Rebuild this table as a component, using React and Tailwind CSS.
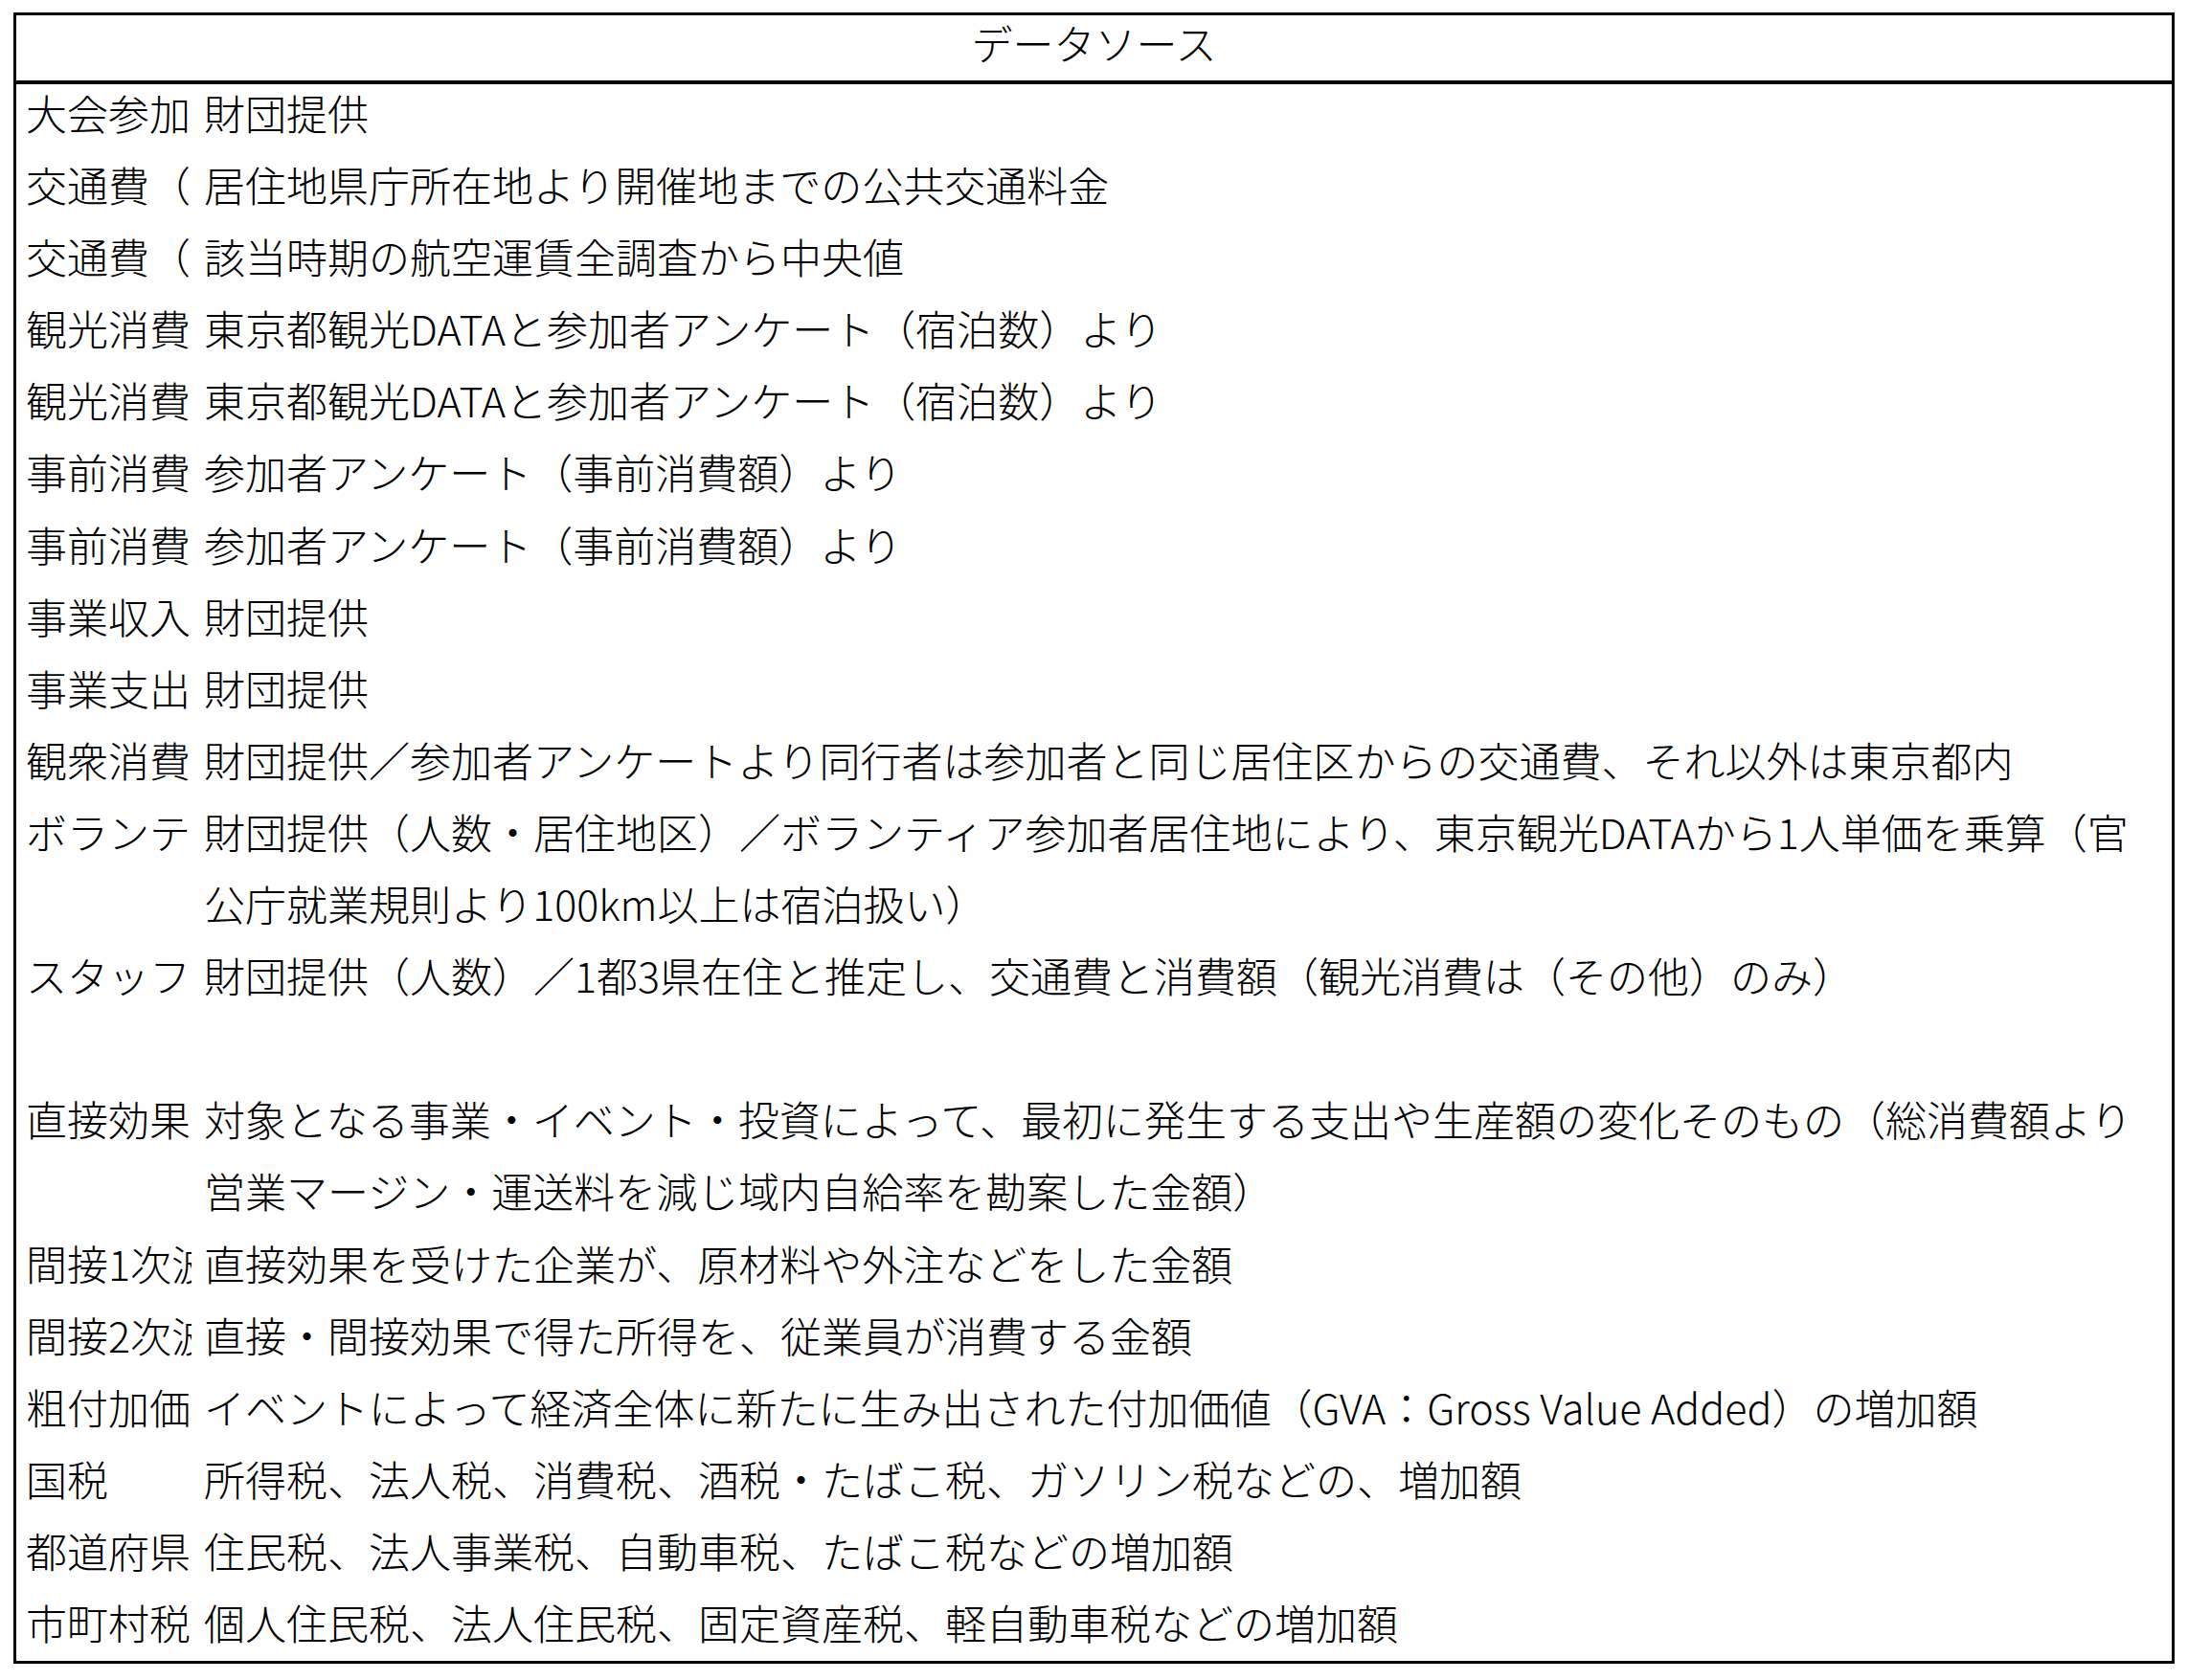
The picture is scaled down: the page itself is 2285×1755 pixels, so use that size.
import React from "react";

const rows = [
  ["大会参加", ["財団提供"]],
  ["交通費（", ["居住地県庁所在地より開催地までの公共交通料金"]],
  ["交通費（", ["該当時期の航空運賃全調査から中央値"]],
  ["観光消費", ["東京都観光DATAと参加者アンケート（宿泊数）より"]],
  ["観光消費", ["東京都観光DATAと参加者アンケート（宿泊数）より"]],
  ["事前消費", ["参加者アンケート（事前消費額）より"]],
  ["事前消費", ["参加者アンケート（事前消費額）より"]],
  ["事業収入", ["財団提供"]],
  ["事業支出", ["財団提供"]],
  ["観衆消費", ["財団提供／参加者アンケートより同行者は参加者と同じ居住区からの交通費、それ以外は東京都内"]],
  [
    "ボランテ",
    [
      "財団提供（人数・居住地区）／ボランティア参加者居住地により、東京観光DATAから1人単価を乗算（官",
      "公庁就業規則より100km以上は宿泊扱い）",
    ],
  ],
  ["スタッフ", ["財団提供（人数）／1都3県在住と推定し、交通費と消費額（観光消費は（その他）のみ）"]],
  ["", [""]],
  [
    "直接効果",
    [
      "対象となる事業・イベント・投資によって、最初に発生する支出や生産額の変化そのもの（総消費額より",
      "営業マージン・運送料を減じ域内自給率を勘案した金額）",
    ],
  ],
  ["間接1次波", ["直接効果を受けた企業が、原材料や外注などをした金額"]],
  ["間接2次波", ["直接・間接効果で得た所得を、従業員が消費する金額"]],
  ["粗付加価値", ["イベントによって経済全体に新たに生み出された付加価値（GVA：Gross Value Added）の増加額"]],
  ["国税", ["所得税、法人税、消費税、酒税・たばこ税、ガソリン税などの、増加額"]],
  ["都道府県", ["住民税、法人事業税、自動車税、たばこ税などの増加額"]],
  ["市町村税", ["個人住民税、法人住民税、固定資産税、軽自動車税などの増加額"]],
];

const DataRow = ({ label, lines }) => (
  <div className="grid grid-cols-[183px_1fr]">
    <div className="overflow-hidden whitespace-nowrap pl-[10px]">{label || "\u00a0"}</div>
    <div className="whitespace-nowrap pl-[13px]">
      {lines.map((line, i) => (
        <div key={i}>{line || "\u00a0"}</div>
      ))}
    </div>
  </div>
);

export default function App() {
  return (
    <div
      className="min-h-screen bg-white pl-[14px] pt-[13px] font-light text-black"
      style={{ fontFamily: '"Noto Sans CJK JP", "Noto Sans", sans-serif' }}
    >
      <div className="h-[1725px] w-[2257px] overflow-hidden border-[3px] border-black text-[43px] leading-[75.1px]">
        <div className="flex h-[72px] items-center justify-center border-b-[4px] border-black pb-[12px] leading-none">
          データソース
        </div>
        <div className="-mt-[8px]">
          {rows.map(([label, lines], i) => (
            <DataRow key={i} label={label} lines={lines} />
          ))}
        </div>
      </div>
    </div>
  );
}
